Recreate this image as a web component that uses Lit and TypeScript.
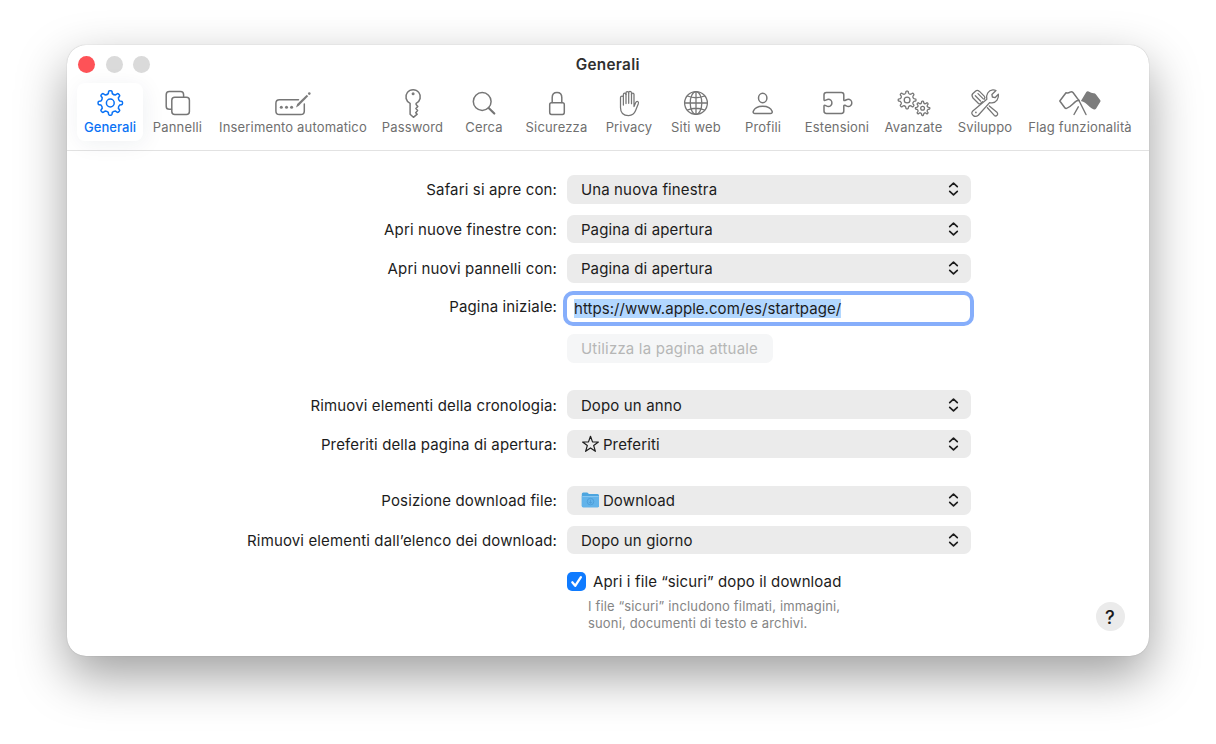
import { LitElement, html, svg, css, nothing, SVGTemplateResult } from "lit";
import { customElement, property } from "lit/decorators.js";

/** Outline of a cog with rounded teeth. */
function gearPath(cx: number, cy: number, outer: number, inner: number, teeth: number): string {
  const step = (Math.PI * 2) / teeth;
  const pt = (r: number, a: number) =>
    `${(cx + r * Math.sin(a)).toFixed(2)} ${(cy - r * Math.cos(a)).toFixed(2)}`;
  let d = "";
  for (let i = 0; i < teeth; i++) {
    const a = i * step;
    d += `${i ? "L" : "M"}${pt(inner, a - step * 0.27)}`;
    d += `L${pt(outer - 0.8, a - step * 0.19)}`;
    d += `Q${pt(outer, a - step * 0.17)} ${pt(outer, a - step * 0.08)}`;
    d += `L${pt(outer, a + step * 0.08)}`;
    d += `Q${pt(outer, a + step * 0.17)} ${pt(outer - 0.8, a + step * 0.19)}`;
    d += `L${pt(inner, a + step * 0.27)}`;
    d += `Q${pt(inner - 0.9, a + step * 0.5)} ${pt(inner, a + step * 0.73)}`;
  }
  return d + "Z";
}

interface Tab {
  label: string;
  center: number;
  width: number;
  icon: SVGTemplateResult;
}

const TABS: Tab[] = [
  {
    label: "Generali", center: 110, width: 66,
    icon: svg`<path d=${gearPath(110.3, 103, 12.2, 9.6, 8)} /><circle cx="110.3" cy="103" r="3.9" />`,
  },
  {
    label: "Pannelli", center: 177.5, width: 69,
    icon: svg`<path d="M171 109.3H168.800Q165.700 109.300 165.700 106.200V94.700Q165.700 91.600 168.800 91.600H180Q183.100 91.600 183.100 94.700V97" /><rect x="171.300" y="97.300" width="17.600" height="17.300" rx="3" />`,
  },
  {
    label: "Inserimento automatico", center: 293, width: 162,
    icon: svg`<path d="M298.500 99.700H279.500Q275.900 99.700 275.900 103.300V111Q275.900 114.600 279.500 114.600H300.700Q304.300 114.600 304.300 111V104" /><path d="M296 107.400L297.200 104L306.800 94.800L308.200 96.200L298.800 105.800Z" class="solid" /><circle cx="309.300" cy="93.600" r="1.300" class="solid" /><g class="solid"><circle cx="281.300" cy="107.300" r="1.500" /><circle cx="286.500" cy="107.300" r="1.500" /><circle cx="291.600" cy="107.300" r="1.500" /></g>`,
  },
  {
    label: "Password", center: 412.5, width: 77,
    icon: svg`<path d="M409.600 103.400A7.200 7.200 0 1 1 415.600 103.400V104.600L417.300 106.500L415.400 108.600L417.100 110.600L415.200 112.700L416.700 114.200L412.900 117.300L409.600 114.300Z" /><circle cx="412.600" cy="93.700" r="1.500" class="solid" />`,
  },
  {
    label: "Cerca", center: 484, width: 66,
    icon: svg`<circle cx="482.200" cy="101.500" r="8.900" /><path d="M488.700 108L494.300 113.500" stroke-width="2.200" />`,
  },
  {
    label: "Sicurezza", center: 556.5, width: 79,
    icon: svg`<rect x="549.200" y="102.700" width="14.600" height="11.700" rx="1.800" /><path d="M551.700 102.500V97.500C551.700 94.300 553.700 92.500 556.500 92.500S561.300 94.300 561.300 97.500V102.500" />`,
  },
  {
    label: "Privacy", center: 629, width: 66,
    icon: svg`<g stroke-width="1.250"><path d="M623.400 105V94.500Q623.400 93.100 624.600 93.100T626 94.500V93Q626 91.600 627.300 91.600T628.700 93V92.800Q628.700 91.300 630 91.300T631.500 92.800V94.400Q631.500 93 632.700 93T634 94.400V106.500L635.600 102.800Q636.400 101.100 637.700 101.500Q638.900 102 638.300 103.700L635.600 110.600Q633.700 115.500 628.600 115.500Q620.500 115.500 620.500 107.400V97.500Q620.500 96.200 622 96.200T623.400 97.500" /><path d="M626 94V103.500M628.700 93V103.300M631.500 94V103.700" /></g>`,
  },
  {
    label: "Siti web", center: 696, width: 68,
    icon: svg`<g stroke-width="1.300"><circle cx="696" cy="103" r="11.400" /><ellipse cx="696" cy="103" rx="5.800" ry="11.400" /><path d="M684.600 103H707.400M696 91.600V114.400M687.400 96Q696 99.500 704.600 96M687.400 110Q696 106.500 704.600 110" /></g>`,
  },
  {
    label: "Profili", center: 763, width: 66,
    icon: svg`<ellipse cx="762.700" cy="98" rx="4.200" ry="4.700" /><path d="M755 113.500C753.500 113.500 752.900 112.500 753.300 111.300C754.400 108.200 758 106.200 762.700 106.200S771 108.200 772.100 111.300C772.500 112.500 771.900 113.500 770.400 113.500Z" />`,
  },
  {
    label: "Estensioni", center: 837, width: 82,
    icon: svg`<path d="M824 99.500V94.800Q824 92.400 826.400 92.400H841.400Q843.800 92.400 843.800 94.800V99.900Q843.800 100.900 844.900 100.500C846.300 99.900 847 99.300 848.200 99.300A3.500 3.500 0 0 1 848.200 106.500C847 106.500 846.300 105.800 844.900 105.300Q843.800 104.900 843.800 106V111Q843.800 113.400 841.400 113.400H826.400Q824 113.400 824 111V106.200Q824 105 825.200 105.400C826.500 105.900 827.100 106.500 828.300 106.500A3.500 3.500 0 0 0 828.300 99.300C827.100 99.300 826.500 100 825.200 100.400Q824 100.800 824 99.500Z" />`,
  },
  {
    label: "Avanzate", center: 913.5, width: 71,
    icon: svg`<g stroke-width="1.300"><path d=${gearPath(906.6, 100, 8.9, 6.9, 8)} /><circle cx="906.600" cy="100" r="2.900" /><path d=${gearPath(922.1, 108.3, 7.2, 5.5, 8)} /><circle cx="922.100" cy="108.300" r="1.900" /></g>`,
  },
  {
    label: "Sviluppo", center: 985, width: 72,
    icon: svg`<g stroke-width="1.300"><path d="M982.500 101.600L980.600 103.500Q979.600 104.400 978.500 103.500L973 98Q971.200 95.500 972.700 93.800L975.700 91Q977.300 89.700 979.500 91.400L984.200 96.100Q985.500 97.500 984.500 98.600L984 99.300M975.300 95.800L980.500 101M978 93.600L983 98.600" /><path d="M989.300 106L997.200 112.600Q998.300 114 997.100 115.300Q995.700 116.600 994.300 115.400L987.400 107.800" /><path d="M972.800 110.900L986.800 99.300C985.800 94.500 988.300 90.400 992.800 89.900Q994.500 89.800 996 90.500L991.900 94.500L992.400 97L995 97.700L998.400 94.200C999 98.700 996.300 102.400 992 102.900Q990.700 103 989.600 102.600L978.300 115.300Q975.500 117.500 973.200 115.400Q970.600 113.300 972.800 110.900Z" /><circle cx="975.900" cy="112.400" r="0.900" class="solid" /></g>`,
  },
  {
    label: "Flag funzionalità", center: 1080, width: 118,
    icon: svg`<path d="M1059.800 101L1066 92.700Q1068 93.600 1070.100 92.100Q1071.700 91.100 1073 92.500L1079 100.600Q1077.500 100 1075.500 101.600C1072.200 104.400 1070.300 107.300 1066.600 108.400Q1065.500 108.700 1064.800 107.700Z" /><path d="M1078.600 99.800L1086 114.500M1078.300 106.800L1074 114.500" stroke-width="1.400" /><path d="M1080.900 101L1086.300 92Q1087.200 90.700 1088.700 91.400Q1091.500 93.400 1094 93.200Q1095 93.200 1095.800 94.200L1100.300 100.300Q1100.800 101 1100.300 101.800L1096 108.700Q1095.100 109.900 1093.500 109.300C1089 107.800 1087.500 102.500 1080.900 101Z" class="solid" />`,
  },
];

@customElement("prefs-tab")
class PrefsTab extends LitElement {
  @property({ attribute: false }) tab!: Tab;
  @property({ type: Boolean, reflect: true }) selected = false;
  static styles = css`
    :host { display: flex; flex-direction: column; align-items: center; height: 58px; border-radius: 8px; color: #6f6f6f; }
    :host([selected]) { color: #0a72f5; background: #fff; box-shadow: 2px 3px 22px rgba(20, 40, 80, 0.065); }
    .icon { width: 56px; height: 34px; display: block; margin-top: 3px; fill: none; stroke: #767676; stroke-width: 1.5; stroke-linecap: round; stroke-linejoin: round; }
    :host([selected]) .icon { stroke: currentColor; }
    .icon .solid { fill: #7c7c7c; stroke: none; }
    .label { font-size: 13px; line-height: 16px; margin-top: -1px; letter-spacing: 0.16px; white-space: nowrap; }
    :host([selected]) .label { font-weight: 500; letter-spacing: 0.05px; }
  `;
  render() {
    const t = this.tab;
    return html`<svg class="icon" viewBox="${t.center - 28} 86 56 34">${t.icon}</svg>
      <div class="label">${t.label}</div>`;
  }
}

@customElement("pop-up")
class PopUp extends LitElement {
  @property() value = "";
  @property() icon = "";
  static styles = css`
    :host { display: flex; align-items: center; width: 404px; height: 28.6px; padding: 0 10.3px 0 14.4px; box-sizing: border-box; border-radius: 7px; background: #ebebeb; }
    .value { flex: 1; white-space: nowrap; padding-top: 1px; }
    .arrows { width: 13px; height: 16px; fill: none; stroke: #1c1c1c; stroke-width: 1.65; stroke-linecap: round; stroke-linejoin: round; }
    .glyph { width: 19px; height: 18px; margin-right: 3px; }
  `;
  render() {
    const glyph =
      this.icon === "star"
        ? html`<svg class="glyph" viewBox="0 0 19 18"><path d="M9.500 1.300L11.500 6.900L17.400 7L12.700 10.600L14.400 16.300L9.500 12.900L4.600 16.300L6.300 10.600L1.600 7L7.500 6.900Z" fill="none" stroke="#1c1c1c" stroke-width="1.200" stroke-linejoin="round" /></svg>`
        : this.icon === "folder"
        ? html`<svg class="glyph" viewBox="0 0 19 18"><path d="M.8 3Q.8 1.500 2.300 1.500H6.300L8 2.900H16.600Q18 2.900 18 4.400V15Q18 16.300 16.600 16.300H2.200Q.8 16.300.8 15Z" fill="#4da5df" /><path d="M.8 5H18V15Q18 16.300 16.600 16.300H2.200Q.8 16.300.8 15Z" fill="#62b3ea" /><path d="M1.500 5.500H17.500" stroke="#8cc8f2" stroke-width=".9" /><circle cx="9.500" cy="10.600" r="3.300" fill="none" stroke="#4796d2" stroke-width=".7" /><path d="M9.500 8.700V12.200M8 10.900L9.500 12.400L11 10.900" fill="none" stroke="#4796d2" stroke-width=".7" /></svg>`
        : nothing;
    return html`${glyph}<span class="value">${this.value}</span>
      <svg class="arrows" viewBox="0 0 13 16"><path d="M2.700 5.700L6.500 2.200L10.300 5.700M2.700 10.300L6.500 13.800L10.300 10.300" /></svg>`;
  }
}

@customElement("app-root")
class AppRoot extends LitElement {
  static styles = css`
    :host { display: block; box-sizing: border-box; width: 1216px; height: 744px; padding: 45px 67px; background: #fff; overflow: hidden; font-family: Inter, "Liberation Sans", sans-serif; font-size: 15px; letter-spacing: 0.14px; color: #1c1c1c; }
    .window { display: flex; flex-direction: column; width: 1081.5px; height: 610.5px; border-radius: 19px; background: #fff; box-shadow: 0 0 1px rgba(0, 0, 0, 0.3), 0 20px 50px rgba(0, 0, 0, 0.38); overflow: hidden; }
    .titlebar { display: grid; grid-template-columns: 1fr auto 1fr; align-items: center; height: 38px; flex: none; }
    .lights { display: flex; gap: 10.5px; padding-left: 11px; }
    .light { width: 17px; height: 17px; border-radius: 50%; background: #dadada; }
    .light.close { background: #fe5257; }
    .title { font-weight: 600; font-size: 15.3px; letter-spacing: 0.3px; line-height: 18px; padding-top: 1px; color: #303030; }
    .tabs { display: flex; height: 67px; flex: none; padding-left: 10px; border-bottom: 1px solid #e2e2e2; }
    .form { display: flex; flex-direction: column; gap: 10.8px; padding-top: 24.2px; flex: none; }
    .row { display: grid; grid-template-columns: 490px 404px; column-gap: 9.5px; align-items: center; height: 28.6px; }
    .label { text-align: right; white-space: nowrap; padding-top: 1px; }
    .spaced { margin-top: 17px; }
    .home { align-items: start; }
    .home .label { line-height: 28px; margin-top: -1px; }
    .field { display: flex; align-items: center; box-sizing: border-box; width: 411px; height: 35px; margin: -2.4px 0 0 -3.5px; border: 4px solid #86aefb; border-radius: 10px; background: #fff; padding-left: 7px; letter-spacing: 0.05px; }
    .selection { background: #b2d7ff; line-height: 19px; }
    .current { margin-top: 1.2px; }
    .use { display: flex; align-items: center; justify-content: center; box-sizing: border-box; padding-top: 1px; width: 206px; height: 28.6px; border-radius: 7px; background: #f5f6f7; color: #b6b6b6; letter-spacing: 0.19px; grid-column: 2; }
    .option { margin-top: 2px; }
    .check { display: flex; align-items: center; gap: 7.5px; grid-column: 2; letter-spacing: 0.12px; }
    .box { width: 19px; height: 19px; border-radius: 5px; background: #0f7bff; }
    .box svg { display: block; width: 19px; height: 19px; }
    .footer { display: grid; grid-template-columns: 1fr 29px; padding: 3px 24px 0 521px; }
    .note { font-size: 13px; letter-spacing: 0.16px; line-height: 17px; color: #858585; }
    .help { display: flex; align-items: center; justify-content: center; width: 29px; height: 29px; margin-top: 4px; border-radius: 50%; background: #ebebeb; font-size: 18.5px; font-weight: 500; letter-spacing: 0; }
  `;
  private row(label: string, value: string, icon = "", spaced = false) {
    return html`<div class="row ${spaced ? "spaced" : ""}">
      <div class="label">${label}</div>
      <pop-up .value=${value} .icon=${icon}></pop-up>
    </div>`;
  }
  render() {
    return html`<div class="window">
      <div class="titlebar">
        <div class="lights"><div class="light close"></div><div class="light"></div><div class="light"></div></div>
        <div class="title">Generali</div>
      </div>
      <div class="tabs">
        ${TABS.map((t, i) => html`<prefs-tab .tab=${t} ?selected=${i === 0} style="width:${t.width}px"></prefs-tab>`)}
      </div>
      <div class="form">
        ${this.row("Safari si apre con:", "Una nuova finestra")}
        ${this.row("Apri nuove finestre con:", "Pagina di apertura")}
        ${this.row("Apri nuovi pannelli con:", "Pagina di apertura")}
        <div class="row home">
          <div class="label">Pagina iniziale:</div>
          <div class="field"><span class="selection">https://www.apple.com/es/startpage/</span></div>
        </div>
        <div class="row current"><div class="use">Utilizza la pagina attuale</div></div>
        ${this.row("Rimuovi elementi della cronologia:", "Dopo un anno", "", true)}
        ${this.row("Preferiti della pagina di apertura:", "Preferiti", "star")}
        ${this.row("Posizione download file:", "Download", "folder", true)}
        ${this.row("Rimuovi elementi dall’elenco dei download:", "Dopo un giorno")}
        <div class="row option">
          <div class="check">
            <div class="box"><svg viewBox="0 0 19 19"><path d="M5.300 10.300L8.200 13.800L13.900 5.200" fill="none" stroke="#fff" stroke-width="2.300" stroke-linecap="round" stroke-linejoin="round" /></svg></div>
            <span>Apri i file “sicuri” dopo il download</span>
          </div>
        </div>
      </div>
      <div class="footer">
        <div class="note">I file “sicuri” includono filmati, immagini,<br />suoni, documenti di testo e archivi.</div>
        <div class="help">?</div>
      </div>
    </div>`;
  }
}
